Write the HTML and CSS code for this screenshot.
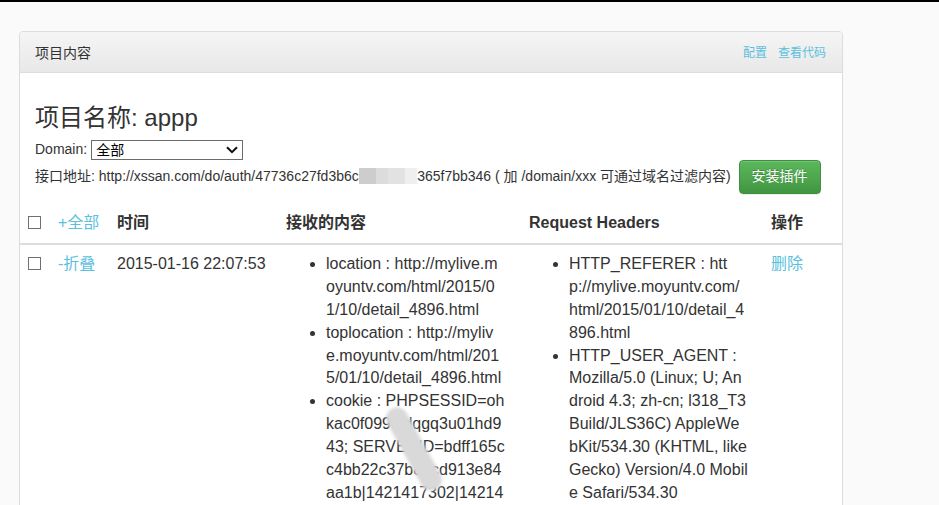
FILE: index.html
```html
<!DOCTYPE html>
<html lang="zh-CN">
<head>
<meta charset="utf-8">
<title>项目内容</title>
<link rel="stylesheet" href="styles.css">
</head>
<body>
<div class="page">
  <div class="panel">
    <div class="panel-heading">
      <span class="panel-title">项目内容</span>
      <span class="heading-links">
        <a href="#" class="link">配置</a>
        <a href="#" class="link">查看代码</a>
      </span>
    </div>
    <div class="panel-body">
      <h3 class="project-name">项目名称: appp</h3>
      <div class="domain-row">
        <label class="domain-label" for="domain">Domain:</label>
        <span class="select-wrap">
          <select id="domain" class="domain-select">
            <option>全部</option>
          </select>
          <svg class="select-arrow" width="12" height="8" viewBox="0 0 12 8"><path d="M1 1.2 L6 6.2 L11 1.2" fill="none" stroke="#111" stroke-width="2"/></svg>
        </span>
      </div>
      <p class="api-line">接口地址: http://xssan.com/do/auth/47736c27fd3b6c<span class="masked">8a5e0d1f</span>365f7bb346 ( 加 /domain/xxx 可通过域名过滤内容) <button class="btn-success">安装插件</button></p>
    </div>
    <table class="data-table">
      <colgroup>
        <col class="c-check"><col class="c-toggle"><col class="c-time"><col class="c-content"><col class="c-headers"><col class="c-op">
      </colgroup>
      <thead>
        <tr>
          <th><input type="checkbox" class="cb"></th>
          <th><a href="#" class="link normal">+全部</a></th>
          <th>时间</th>
          <th>接收的内容</th>
          <th>Request Headers</th>
          <th>操作</th>
        </tr>
      </thead>
      <tbody>
        <tr>
          <td><input type="checkbox" class="cb"></td>
          <td><a href="#" class="link">-折叠</a></td>
          <td>2015-01-16 22:07:53</td>
          <td class="rel">
            <ul class="kv">
              <li>location : http://mylive.m<br>oyuntv.com/html/2015/0<br>1/10/detail_4896.html</li>
              <li>toplocation : http://myliv<br>e.moyuntv.com/html/201<br>5/01/10/detail_4896.html</li>
              <li>cookie : PHPSESSID=oh<br>kac0f0995idqgq3u01hd9<br>43; SERVERID=bdff165c<br>c4bb22c37b80cd913e84<br>aa1b|1421417302|14214<br>17302</li>
            </ul>
            <div class="smear"></div>
          </td>
          <td>
            <ul class="kv">
              <li>HTTP_REFERER : htt<br>p://mylive.moyuntv.com/<br>html/2015/01/10/detail_4<br>896.html</li>
              <li>HTTP_USER_AGENT :<br>Mozilla/5.0 (Linux; U; An<br>droid 4.3; zh-cn; l318_T3<br>Build/JLS36C) AppleWe<br>bKit/534.30 (KHTML, like<br>Gecko) Version/4.0 Mobil<br>e Safari/534.30</li>
            </ul>
          </td>
          <td><a href="#" class="link">删除</a></td>
        </tr>
      </tbody>
    </table>
  </div>
</div>
</body>
</html>
```
FILE: styles.css
```css
html, body {
  margin: 0;
  padding: 0;
  overflow: hidden;
}
body {
  background: #fafafa;
  border-top: 2px solid #000;
  font-family: "Liberation Sans", Arial, "Noto Sans CJK SC", sans-serif;
  font-size: 14px;
  line-height: 1.428571;
  color: #333;
}
.page {
  padding: 29px 0 0 19px;
}
.panel {
  width: 822px;
  background: #fff;
  border: 1px solid #ddd;
  border-radius: 4px;
  box-shadow: 0 1px 1px rgba(0,0,0,.05);
  min-height: 600px;
}
.panel-heading {
  box-sizing: border-box;
  display: flex;
  justify-content: space-between;
  align-items: center;
  height: 41px;
  padding: 4px 16px 0 15px;
  background: linear-gradient(#f5f5f5, #e8e8e8);
  border-bottom: 1px solid #ddd;
  border-radius: 3px 3px 0 0;
}
.panel-title {
  font-size: 14px;
  color: #333;
}
.heading-links {
  display: flex;
  gap: 11px;
  font-size: 12px;
}
.link {
  color: #5bc0de;
  text-decoration: none;
}
.panel-body {
  padding: 15px 15px 10px;
}
.project-name {
  margin: 17px 0 9px;
  font-size: 24px;
  font-weight: normal;
  line-height: 1.1;
}
.domain-row {
  display: flex;
  align-items: center;
  gap: 4px;
  height: 20px;
}
.select-wrap {
  position: relative;
  display: inline-block;
  height: 20px;
}
.domain-select {
  appearance: none;
  -webkit-appearance: none;
  width: 152px;
  height: 20px;
  margin: 0;
  padding: 0 0 0 4px;
  border: 1px solid #6b6b6b;
  border-radius: 0;
  background: #fff;
  font-family: "Liberation Sans", Arial, "Noto Sans CJK SC", sans-serif;
  font-size: 14px;
  color: #000;
  display: block;
}
.select-arrow {
  position: absolute;
  right: 5px;
  top: 6px;
  pointer-events: none;
}
.api-line {
  margin: 0;
}
.masked {
  color: transparent;
  background: linear-gradient(90deg, #cdcdcd 0, #cdcdcd 30%, #dcdcdc 30%, #dcdcdc 50%, #e2e2e2 50%, #e2e2e2 80%, #efefef 80%);
}
.btn-success {
  display: inline-block;
  margin-left: 4px;
  padding: 6px 12px;
  font-family: "Liberation Sans", Arial, "Noto Sans CJK SC", sans-serif;
  font-size: 14px;
  line-height: 1.428571;
  color: #fff;
  background: linear-gradient(#5cb85c, #419641);
  border: 1px solid #3e8f3e;
  border-radius: 4px;
  box-shadow: inset 0 1px 0 rgba(255,255,255,.15), 0 1px 1px rgba(0,0,0,.075);
  text-shadow: 0 -1px 0 rgba(0,0,0,.2);
  cursor: pointer;
}
.data-table {
  width: 822px;
  table-layout: fixed;
  border-collapse: collapse;
  font-size: 16px;
  line-height: 1.428571;
}
.c-check { width: 30px; }
.c-toggle { width: 59px; }
.c-time { width: 169px; }
.c-content { width: 243px; }
.c-headers { width: 242px; }
.c-op { width: 79px; }
.data-table th {
  padding: 8px;
  text-align: left;
  vertical-align: bottom;
  font-weight: bold;
  border-bottom: 2px solid #ddd;
}
.data-table th .normal {
  font-weight: normal;
}
.data-table td {
  padding: 8px;
  vertical-align: top;
  white-space: nowrap;
}
.rel {
  position: relative;
}
.cb {
  appearance: none;
  -webkit-appearance: none;
  width: 13px;
  height: 13px;
  margin: 0;
  border: 1px solid #707070;
  background: #fff;
  vertical-align: -1px;
}
.kv {
  margin: 0;
  padding-left: 40px;
}
.smear {
  position: absolute;
  left: 125px;
  top: 158px;
  width: 22px;
  height: 92px;
  border-radius: 11px;
  background: #d9d9d9;
  transform: rotate(-29deg);
  filter: blur(1.5px);
}
```
